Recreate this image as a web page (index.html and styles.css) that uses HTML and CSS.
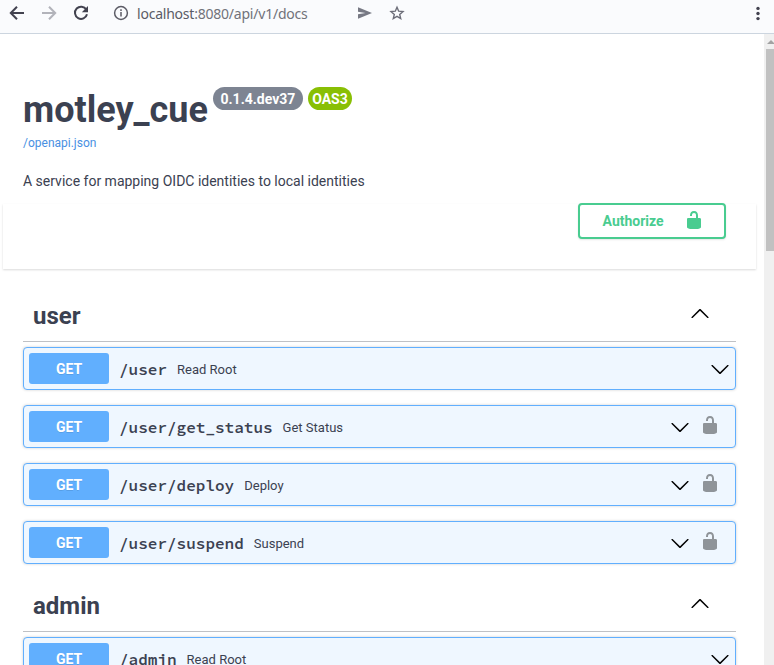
FILE: index.html
```html
<!DOCTYPE html>
<html lang="en">
<head>
<meta charset="utf-8">
<title>motley_cue - Swagger UI</title>
<link rel="stylesheet" href="styles.css">
</head>
<body>
<svg class="defs" aria-hidden="true">
  <symbol id="unlocked" viewBox="0 0 20 20"><path d="M15.8 8H14V5.6C14 2.703 12.665 1 10 1 7.334 1 6 2.703 6 5.6V6h2v-.801C8 3.754 8.797 3 10 3c1.203 0 2 .754 2 2.199V8H4c-.553 0-1 .646-1 1.199V17c0 .549.428 1.139.951 1.307l1.197.387C5.672 18.861 6.55 19 7.1 19h5.8c.549 0 1.428-.139 1.951-.307l1.196-.387c.524-.167.953-.757.953-1.306V9.199C17 8.646 16.352 8 15.8 8z"/></symbol>
  <symbol id="down" viewBox="0 0 20 20"><path d="M17.418 6.109c.272-.268.709-.268.979 0s.271.701 0 .969l-7.908 7.83c-.27.268-.707.268-.979 0l-7.908-7.83c-.27-.268-.27-.701 0-.969.271-.268.709-.268.979 0L10 13.25l7.418-7.141z"/></symbol>
  <symbol id="up" viewBox="0 0 20 20"><path d="M17.418 14.908c.272.268.709.268.979 0s.271-.701 0-.969l-7.908-7.83c-.27-.268-.707-.268-.979 0l-7.908 7.83c-.27.268-.27.701 0 .969.271.268.709.268.979 0L10 7.767l7.418 7.141z"/></symbol>
</svg>
<div class="toolbar">
  <svg class="tool back" viewBox="0 0 16 16"><path d="M15 8H2.5M8 1.8 1.8 8 8 14.2"/></svg>
  <svg class="tool forward" viewBox="0 0 16 16"><path d="M1 8h12.5M8 1.8 14.2 8 8 14.2"/></svg>
  <svg class="tool reload" viewBox="0 0 16 16"><path d="M13.3 4.6A6.1 6.1 0 1 0 14 9.2"/><path class="solid" d="M15 1v6.2H8.8z"/></svg>
  <svg class="tool info" viewBox="0 0 16 16"><circle cx="8" cy="8" r="6.4"/><path d="M8 7v4.5M8 4.3v1.6"/></svg>
  <div class="url"><span class="host">localhost</span>:8080/api/v1/docs</div>
  <svg class="tool send" viewBox="0 0 16 16"><path class="solid" d="M1 2.2 15 8 1 13.8V9.3L8.500 8 1 6.700z"/></svg>
  <svg class="tool star" viewBox="0 0 16 16"><path d="m8 2.200 1.700 4 4.300.4-3.300 2.800 1 4.200L8 11.400l-3.700 2.200 1-4.200L2 6.600l4.300-.4z"/></svg>
  <svg class="tool more" viewBox="0 0 16 16"><circle cx="8" cy="3.400" r="1.700"/><circle cx="8" cy="8.500" r="1.700"/><circle cx="8" cy="13.600" r="1.700"/></svg>
</div>
<div class="viewport">
  <main class="page">
    <header class="info-block">
      <div class="heading"><h1>motley_cue</h1><span class="badge version">0.1.4.dev37</span><span class="badge oas">OAS3</span></div>
      <a class="spec">/openapi.json</a>
      <p>A service for mapping OIDC identities to local identities</p>
    </header>
    <section class="schemes">
      <button class="authorize"><span>Authorize</span><svg><use href="#unlocked"/></svg></button>
    </section>
    <section class="tag">
      <h3><span>user</span><svg><use href="#up"/></svg></h3>
      <div class="op"><span class="method">GET</span><code>/user</code><span class="summary">Read Root</span><svg><use href="#down"/></svg></div>
      <div class="op"><span class="method">GET</span><code>/user/get_status</code><span class="summary">Get Status</span><svg><use href="#down"/></svg><svg class="lock"><use href="#unlocked"/></svg></div>
      <div class="op"><span class="method">GET</span><code>/user/deploy</code><span class="summary">Deploy</span><svg><use href="#down"/></svg><svg class="lock"><use href="#unlocked"/></svg></div>
      <div class="op"><span class="method">GET</span><code>/user/suspend</code><span class="summary">Suspend</span><svg><use href="#down"/></svg><svg class="lock"><use href="#unlocked"/></svg></div>
    </section>
    <section class="tag">
      <h3><span>admin</span><svg><use href="#up"/></svg></h3>
      <div class="op"><span class="method">GET</span><code>/admin</code><span class="summary">Read Root</span><svg><use href="#down"/></svg></div>
    </section>
  </main>
  <div class="scrollbar"><div class="arrow"></div><div class="thumb"></div></div>
</div>
</body>
</html>
```
FILE: styles.css
```css
* { box-sizing: border-box; }
body {
  margin: 0;
  height: 665px;
  overflow: hidden;
  display: flex;
  flex-direction: column;
  background: #fff;
  color: #3b4151;
  font-family: Roboto, sans-serif;
}
.defs { display: none; }
svg { flex: none; width: 20px; height: 20px; }

.toolbar {
  flex: none;
  height: 34px;
  padding: 0 8.5px 0 9px;
  display: flex;
  align-items: flex-start;
  background: #fafbfd;
  border-bottom: 1px solid #ccd5df;
}
.tool { width: 16px; height: 16px; margin-top: 5px; fill: none; stroke: #42424f; stroke-width: 2; }
.tool .solid { fill: #42424f; stroke: none; }
.forward { margin-left: 16px; stroke: #b2b3ba; }
.reload { margin-left: 16px; }
.info { margin-left: 24px; stroke: #5c5c66; stroke-width: 1.5; }
.url {
  width: 204px;
  margin-left: 8px;
  font: 14px/27px "Noto Sans", sans-serif;
  letter-spacing: -.22px;
  color: #71727a;
  white-space: nowrap;
}
.host { color: #5a5b66; }
.send { margin-left: 16px; }
.tool.send .solid { fill: #777984; }
.star { margin-left: 16px; stroke: #6c6d78; stroke-width: 1.4; }
.more { margin-left: auto; fill: #42424f; stroke: none; }

.viewport { flex: 1; min-height: 0; display: flex; overflow: hidden; }
.page { flex: 1; overflow: hidden; }
.info-block { height: 170px; padding: 53px 23px 0; }
.heading { display: flex; align-items: flex-start; height: 49px; }
h1 { margin: 0; font-size: 36px; line-height: 46px; font-weight: 700; }
.badge {
  height: 23px;
  border-radius: 12px;
  color: #fff;
  font-size: 14px;
  line-height: 24px;
  font-weight: 700;
  text-align: center;
}
.version { width: 90px; margin-left: 5px; background: #7d8492; }
.oas { width: 44px; margin-left: 5px; background: #89bf04; }
.spec { display: block; font-size: 12px; line-height: 14px; color: #4990e2; }
.info-block p { margin: 23px 0 0; font-size: 14px; line-height: 16px; }

.schemes {
  height: 65px;
  margin: 0 8px 20px 3px;
  padding: 0 30px 0 0;
  display: flex;
  justify-content: flex-end;
  align-items: flex-start;
  box-shadow: 0 1px 2px rgba(0, 0, 0, .15);
}
.authorize {
  width: 148px;
  height: 36px;
  margin-top: -1px;
  padding: 0 20px 0 22.6px;
  display: flex;
  align-items: center;
  justify-content: space-between;
  border: 2px solid #49cc90;
  border-radius: 4px;
  background: #fff;
  box-shadow: 0 1px 2px rgba(0, 0, 0, .1);
  color: #49cc90;
  font: 700 14px/17px Roboto, sans-serif;
}
.authorize svg { fill: #49cc90; margin-top: -2px; }

.tag { width: 713px; margin-left: 23px; margin-bottom: 12px; }
h3 {
  height: 53px;
  margin: 0 0 5px;
  padding: 0 26px 0 10px;
  display: flex;
  align-items: center;
  justify-content: space-between;
  border-bottom: 1px solid #bfc1c5;
  font-size: 24px;
  line-height: 28px;
  font-weight: 700;
}
h3 span { padding-top: 2px; }
h3 svg { margin-top: -4px; fill: #000; }
.op {
  height: 43px;
  margin-bottom: 15px;
  padding: 5px 6px 5px 5px;
  display: flex;
  align-items: center;
  border: 1px solid #61affe;
  border-radius: 4px;
  background: #eff7ff;
  box-shadow: 0 0 3px rgba(0, 0, 0, .19);
}
.method {
  width: 80px;
  height: 31px;
  border-radius: 3px;
  background: #61affe;
  color: #fff;
  font-size: 14px;
  line-height: 32px;
  font-weight: 700;
  text-align: center;
  text-shadow: 0 1px 0 rgba(0, 0, 0, .1);
}
code {
  margin-left: 10px;
  font: 600 16px/20px "Source Code Pro", "DejaVu Sans Mono", monospace;
}
.summary { margin-left: 10px; margin-right: auto; font-size: 13px; line-height: 20px; padding-top: 2px; }
.op svg { fill: #000; margin-right: -1px; }
.op svg:not(:last-child) { margin-right: 10px; }
.op .lock { fill: #8f9499; margin: -3px 9px 0 0; }

.scrollbar { width: 10px; background: #f0f0f0; padding: 6px 0 0 2px; }
.arrow { width: 0; height: 0; margin-left: 1px; border: 4px solid transparent; border-top: 0; border-bottom-color: #a3a3a3; }
.thumb { height: 202px; margin-top: 5px; background: #c1c1c1; }
```
